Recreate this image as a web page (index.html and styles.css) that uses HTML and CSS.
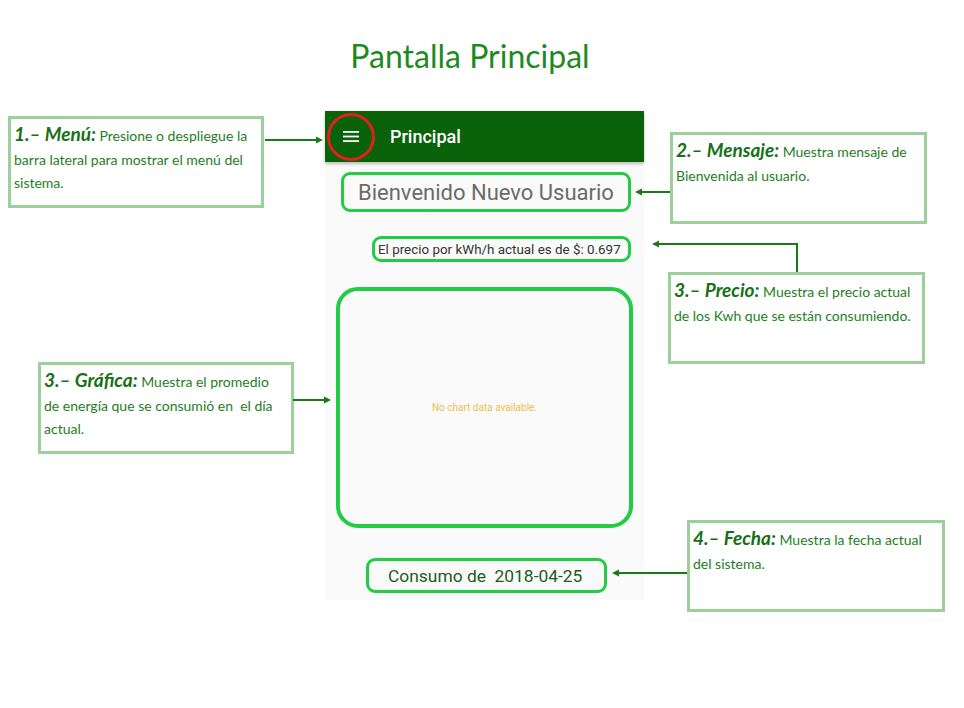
FILE: index.html
```html
<!DOCTYPE html>
<html lang="es">
<head>
<meta charset="utf-8">
<title>Pantalla Principal</title>
<link rel="stylesheet" href="styles.css">
</head>
<body>
<div class="canvas">
  <h1 class="title">Pantalla Principal</h1>

  <div class="phone">
    <div class="appbar">
      <div class="menu-btn">
        <svg width="16" height="13" viewBox="0 0 16 13"><rect x="0" y="1" width="16" height="1.8" fill="#fff"/><rect x="0" y="5.6" width="16" height="1.8" fill="#fff"/><rect x="0" y="10.2" width="16" height="1.8" fill="#fff"/></svg>
      </div>
      <span class="appbar-title">Principal</span>
    </div>
    <div class="screen">
      <div class="hl welcome">Bienvenido Nuevo Usuario</div>
      <div class="hl price">El precio por kWh/h actual es de $: 0.697</div>
      <div class="hl chart"><span class="nodata">No chart data available.</span></div>
      <div class="hl date">Consumo de&nbsp; 2018-04-25</div>
    </div>
  </div>

  <div class="note note-menu"><b>1.– Menú:</b> Presione o despliegue la barra lateral para mostrar el menú del sistema.</div>
  <div class="note note-msg"><b>2.– Mensaje:</b> Muestra mensaje de Bienvenida al usuario.</div>
  <div class="note note-price"><b>3.– Precio:</b> Muestra el precio actual de los Kwh que se están consumiendo.</div>
  <div class="note note-chart"><b>3.– Gráfica:</b> Muestra el promedio de energía que se consumió en&nbsp; el día actual.</div>
  <div class="note note-date"><b>4.– Fecha:</b> Muestra la fecha actual del sistema.</div>

  <svg class="arrows" width="964" height="708" viewBox="0 0 964 708">
    <g stroke="#1a7a1a" stroke-width="2" fill="none">
      <line x1="265" y1="140" x2="318" y2="140"/>
      <line x1="670" y1="192" x2="640" y2="192"/>
      <polyline points="797,272 797,244 657,244"/>
      <line x1="293" y1="400" x2="326" y2="400"/>
      <line x1="687" y1="573" x2="617" y2="573"/>
    </g>
    <g fill="#1a7a1a">
      <polygon points="323,140 316,136.5 316,143.5"/>
      <polygon points="635,192 642,188.5 642,195.5"/>
      <polygon points="652,244 659,240.5 659,247.5"/>
      <polygon points="331,400 324,396.5 324,403.5"/>
      <polygon points="612,573 619,569.5 619,576.5"/>
    </g>
  </svg>
</div>
</body>
</html>
```

FILE: styles.css
```css
html, body {
  margin: 0;
  padding: 0;
  background: #fff;
}

.canvas {
  position: relative;
  width: 964px;
  height: 708px;
  overflow: hidden;
  font-family: Lato, "Open Sans", sans-serif;
}

.title {
  margin: 0;
  padding-top: 36px;
  padding-right: 24px;
  text-align: center;
  font-family: Lato, "Open Sans", sans-serif;
  font-weight: 400;
  font-size: 32px;
  line-height: 40px;
  color: #1e8a1e;
}

/* Phone screenshot */
.phone {
  position: absolute;
  left: 325px;
  top: 111px;
  width: 319px;
  height: 489px;
  background: #fafafa;
  display: flex;
  flex-direction: column;
  font-family: Roboto, "Liberation Sans", sans-serif;
}

.appbar {
  height: 51px;
  background: #0a620a;
  display: flex;
  align-items: center;
  box-shadow: 0 2px 3px rgba(0,0,0,0.25);
  position: relative;
  z-index: 1;
}

.menu-btn {
  width: 48px;
  height: 48px;
  box-sizing: border-box;
  margin-left: 2px;
  border: 3px solid #e0201e;
  border-radius: 50%;
  display: flex;
  align-items: center;
  justify-content: center;
}

.appbar-title {
  margin-left: 15px;
  color: #fff;
  font-size: 18px;
  font-weight: 500;
}

.screen {
  flex: 1;
  display: flex;
  flex-direction: column;
  align-items: flex-start;
}

.hl {
  box-sizing: border-box;
  border: 3px solid #22cc44;
  border-radius: 9px;
  display: flex;
  align-items: center;
}

.welcome {
  margin: 10px 0 0 16px;
  width: 290px;
  height: 40px;
  padding-left: 14px;
  font-size: 22px;
  color: #6a6a6a;
}

.price {
  margin: 24px 0 0 47px;
  width: 259px;
  height: 26px;
  padding-left: 3px;
  font-size: 13.4px;
  color: #333;
}

.chart {
  margin: 25px 0 0 11px;
  width: 297px;
  height: 241px;
  border-width: 4px;
  border-radius: 22px;
  justify-content: center;
}

.nodata {
  font-size: 10px;
  color: #eac04e;
}

.date {
  margin: 30px 0 0 41px;
  width: 241px;
  height: 35px;
  padding-left: 19px;
  font-size: 17.4px;
  color: #1d5a1d;
}

/* Callout notes */
.note {
  position: absolute;
  box-sizing: border-box;
  width: 256px;
  height: 92px;
  border: 3px solid #9bd09b;
  background: #fff;
  padding: 5px 3px 0 3px;
  font-size: 14px;
  line-height: 23.5px;
  color: #1e7e1e;
}

.note b {
  font-size: 19px;
  line-height: 20px;
  font-style: italic;
  font-weight: 700;
  color: #167016;
}

.note-menu { left: 8px; top: 116px; }
.note-msg { left: 670px; top: 132px; width: 257px; }
.note-price { left: 668px; top: 272px; width: 257px; }
.note-chart { left: 38px; top: 362px; padding-right: 16px; }
.note-date { left: 687px; top: 520px; width: 258px; }

.arrows {
  position: absolute;
  left: 0;
  top: 0;
  pointer-events: none;
}
```
